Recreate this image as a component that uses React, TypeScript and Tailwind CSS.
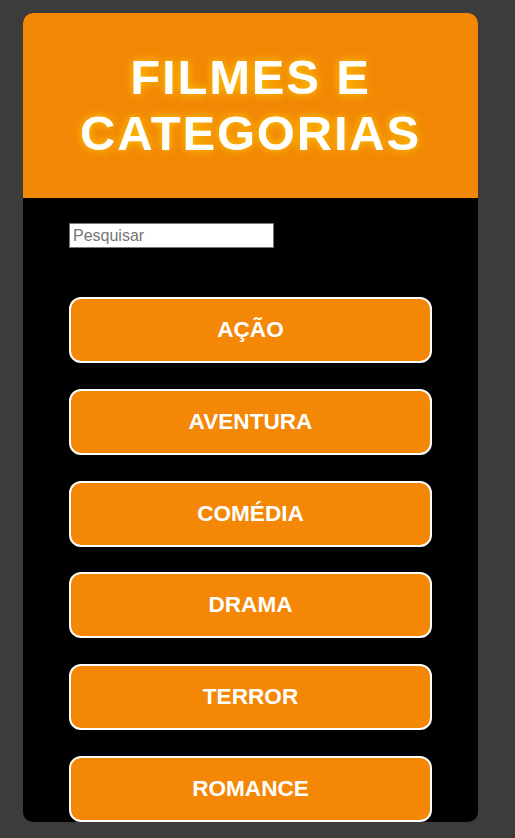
import React from "react";

const cats = ["AÇÃO", "AVENTURA", "COMÉDIA", "DRAMA", "TERROR", "ROMANCE"];

export default function App() {
  return (
    <div className="min-h-[838px] w-full bg-[#3c3c3c] pt-[13px]" style={{ fontFamily: '"Liberation Sans", Arial, sans-serif' }}>
      <div className="ml-[23px] w-[455px] h-[809px] overflow-hidden rounded-[10px] bg-black">
        <div className="h-[185px] bg-[#f28705] flex items-start justify-center pt-[36px]">
          <h1 className="text-center text-white font-bold text-[49px] leading-[56px] tracking-[1.8px] [text-shadow:0_0_10px_#ffcc00]">
            FILMES E<br />CATEGORIAS
          </h1>
        </div>
        <div className="px-[46px] pt-[25px]">
          <input
            type="text"
            placeholder="Pesquisar"
            className="block w-[205px] h-[25px] bg-white border border-[#767676] px-[3px] text-[16px] text-black placeholder:text-[#757575] outline-none"
            style={{ fontFamily: '"Liberation Sans", Arial, sans-serif' }}
          />
          <div className="mt-[49px] flex flex-col gap-[25.8px]">
            {cats.map((c) => (
              <button
                key={c}
                className="h-[66px] w-full rounded-[12px] border-2 border-white bg-[#f48705] text-white font-bold text-[22.6px]"
                style={{ fontFamily: '"Liberation Sans", Arial, sans-serif' }}
              >
                {c}
              </button>
            ))}
          </div>
        </div>
      </div>
    </div>
  );
}
